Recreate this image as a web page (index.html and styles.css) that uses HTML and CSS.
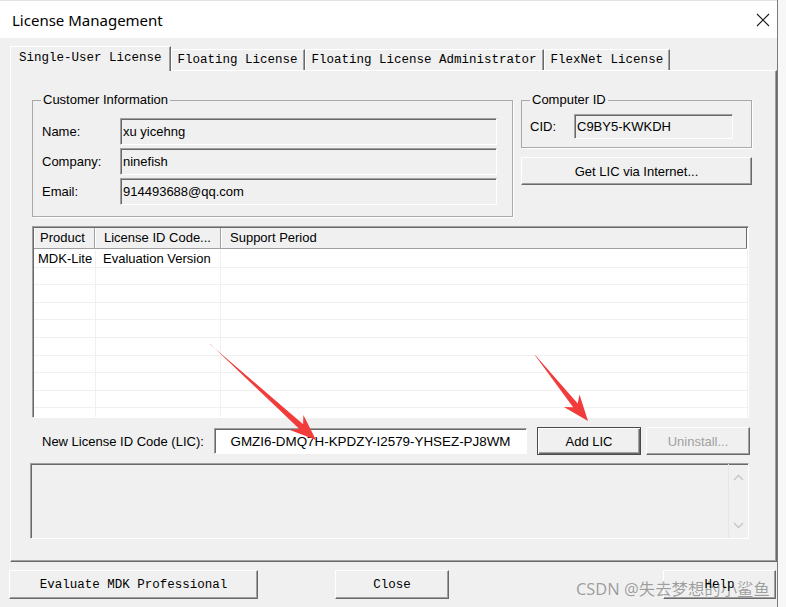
FILE: index.html
```html
<!DOCTYPE html>
<html lang="en">

<head>
    <meta charset="UTF-8">
    <meta name="viewport" content="width=device-width, initial-scale=1.0">
    <title>License Management</title>
    <link rel="stylesheet" href="styles.css">
</head>

<body>
    <div class="window">
        <div class="titlebar">
            <span class="title">License Management</span>
            <svg class="close-icon" width="14" height="14" viewBox="0 0 14 14">
                <path d="M1 1L13 13M13 1L1 13" stroke="#1a1a1a" stroke-width="1.1" fill="none" />
            </svg>
        </div>

        <div class="dialog">
            <div class="tabs">
                <div class="tab active">Single-User License</div>
                <div class="tab">Floating License</div>
                <div class="tab">Floating License Administrator</div>
                <div class="tab">FlexNet License</div>
            </div>

            <div class="panel">
                <div class="top-row">
                    <fieldset class="group customer">
                        <legend>Customer Information</legend>
                        <div class="fields">
                            <label>Name:</label>
                            <div class="field">xu yicehng</div>
                            <label>Company:</label>
                            <div class="field">ninefish</div>
                            <label>Email:</label>
                            <div class="field">914493688@qq.com</div>
                        </div>
                    </fieldset>

                    <div class="side">
                        <fieldset class="group computer">
                            <legend>Computer ID</legend>
                            <div class="cid-row">
                                <label>CID:</label>
                                <div class="field">C9BY5-KWKDH</div>
                            </div>
                        </fieldset>
                        <button class="btn get-lic">Get LIC via Internet...</button>
                    </div>
                </div>

                <div class="list">
                    <div class="list-head">
                        <div class="col c1">Product</div>
                        <div class="col c2">License ID Code...</div>
                        <div class="col c3">Support Period</div>
                    </div>
                    <div class="list-body">
                        <div class="row">
                            <div class="cell c1">MDK-Lite</div>
                            <div class="cell c2">Evaluation Version</div>
                            <div class="cell c3"></div>
                        </div>
                        <div class="row"><div class="cell c1"></div><div class="cell c2"></div><div class="cell c3"></div></div>
                        <div class="row"><div class="cell c1"></div><div class="cell c2"></div><div class="cell c3"></div></div>
                        <div class="row"><div class="cell c1"></div><div class="cell c2"></div><div class="cell c3"></div></div>
                        <div class="row"><div class="cell c1"></div><div class="cell c2"></div><div class="cell c3"></div></div>
                        <div class="row"><div class="cell c1"></div><div class="cell c2"></div><div class="cell c3"></div></div>
                        <div class="row"><div class="cell c1"></div><div class="cell c2"></div><div class="cell c3"></div></div>
                        <div class="row"><div class="cell c1"></div><div class="cell c2"></div><div class="cell c3"></div></div>
                        <div class="row"><div class="cell c1"></div><div class="cell c2"></div><div class="cell c3"></div></div>
                        <div class="row"><div class="cell c1"></div><div class="cell c2"></div><div class="cell c3"></div></div>
                    </div>
                </div>

                <div class="lic-row">
                    <label>New License ID Code (LIC):</label>
                    <div class="field lic-input">GMZI6-DMQ7H-KPDZY-I2579-YHSEZ-PJ8WM</div>
                    <button class="btn default add-lic">Add LIC</button>
                    <button class="btn uninstall" disabled>Uninstall...</button>
                </div>

                <div class="log">
                    <div class="scrollbar">
                        <svg width="11" height="7" viewBox="0 0 11 7"><path d="M1 6L5.5 1.5L10 6" stroke="#c4c4c4" stroke-width="1.3" fill="none" /></svg>
                        <svg width="11" height="7" viewBox="0 0 11 7"><path d="M1 1L5.5 5.5L10 1" stroke="#c4c4c4" stroke-width="1.3" fill="none" /></svg>
                    </div>
                </div>
            </div>

            <div class="footer">
                <button class="btn mono evaluate">Evaluate MDK Professional</button>
                <button class="btn mono close">Close</button>
                <button class="btn mono help">Help</button>
            </div>
        </div>

        <!-- red annotation arrows from the screenshot -->
        <svg class="arrows" width="786" height="607" viewBox="0 0 786 607">
            <polygon points="209.7,343.6 299.1,428.7 290,429.9 316,440 303.4,415.1 303.1,424.3 210.3,344.4" fill="#f23b3b" />
            <polygon points="534.6,354.7 573.1,407.3 563.9,407 588,421 579.5,394.4 577.7,403.5 535.4,355.3" fill="#f23b3b" />
        </svg>

        <div class="watermark">CSDN @失去梦想的小鲨鱼</div>
    </div>
</body>

</html>
```

FILE: styles.css
```css
body {
    margin: 0;
    width: 786px;
    height: 607px;
    overflow: hidden;
    background-color: #f7f7f7;
    font-family: "Liberation Sans", Arial, sans-serif;
    font-size: 13px;
    color: #000;
}

.window {
    position: relative;
    width: 778px;
    height: 607px;
    box-sizing: border-box;
    background-color: #f0f0f0;
    border-right: 1px solid #7a7a7a;
}

.titlebar {
    height: 38px;
    box-sizing: border-box;
    background-color: #fff;
    border-top: 1px solid #e2e2e2;
    display: flex;
    align-items: center;
    justify-content: space-between;
    padding: 0 7px 0 12px;
}

.title {
    font-family: "Noto Sans", sans-serif;
    font-size: 15px;
}

.dialog {
    padding: 8px 0 0 10px;
}

/* tabs */
.tabs {
    position: relative;
    z-index: 1;
    display: flex;
    align-items: flex-end;
    height: 24px;
}

.tab {
    height: 21px;
    box-sizing: border-box;
    padding: 0 6px;
    border-top: 1px solid #fff;
    border-left: 1px solid #fff;
    border-right: 1px solid #696969;
    box-shadow: inset -1px 0 #a0a0a0;
    font: 12.5px/20px "Liberation Mono", monospace;
    white-space: nowrap;
}

.tab.active {
    height: 25px;
    margin-bottom: -1px;
    padding: 0 8px;
    line-height: 22px;
    background-color: #f0f0f0;
}

.panel {
    height: 492px;
    box-sizing: border-box;
    border: 1px solid;
    border-color: #fff #696969 #696969 #fff;
    box-shadow: inset -1px -1px #a0a0a0;
    padding: 21px 0 0 21px;
}

/* group boxes */
.top-row {
    display: flex;
    align-items: flex-start;
    gap: 8px;
}

.group {
    margin: 0;
    box-sizing: border-box;
    border: 1px solid #a9a9a9;
    box-shadow: 1px 1px 0 #fff;
}

.group legend {
    padding: 0 2px;
    line-height: 16px;
}

.customer {
    width: 481px;
    padding: 0 15px 11px 8px;
}

.fields {
    display: grid;
    grid-template-columns: 79px 377px;
    grid-auto-rows: 27px;
    row-gap: 3px;
    align-items: center;
    margin-top: 10px;
}

.fields label {
    padding-left: 1px;
}

.field {
    height: 27px;
    box-sizing: border-box;
    display: flex;
    align-items: center;
    padding: 0 2px;
    border: 1px solid;
    border-color: #a0a0a0 #fff #fff #a0a0a0;
    box-shadow: inset 1px 1px #696969;
    background-color: #f0f0f0;
    white-space: nowrap;
}

.side {
    width: 231px;
}

.computer {
    width: 230px;
    padding: 0 18px 8px 8px;
}

.cid-row {
    display: flex;
    align-items: center;
    margin-top: 6px;
}

.cid-row label {
    width: 44px;
}

.cid-row .field {
    width: 159px;
    height: 25px;
}

/* buttons */
.btn {
    margin: 0;
    padding: 0;
    box-sizing: border-box;
    font: inherit;
    color: #000;
    background-color: #f0f0f0;
    border: 1px solid;
    border-color: #fff #696969 #696969 #fff;
    box-shadow: inset -1px -1px #a0a0a0;
}

.btn.default {
    border-color: #4a4a4a;
    box-shadow: inset 1px 1px #fff, inset -1px -1px #696969, inset -2px -2px #a0a0a0;
}

.btn:disabled {
    color: #a0a0a0;
}

.btn.mono {
    font: 12.5px "Liberation Mono", monospace;
}

.get-lic {
    width: 231px;
    height: 28px;
    margin-top: 9px;
}

/* license list */
.list {
    width: 717px;
    height: 192px;
    margin-top: 9px;
    box-sizing: border-box;
    padding: 1px 0 0 1px;
    border: 1px solid;
    border-color: #a0a0a0 #fff #fff #a0a0a0;
    box-shadow: inset 1px 1px #696969;
    background-color: #fff;
    overflow: hidden;
}

.list-head {
    display: flex;
    height: 21px;
    margin-right: 1px;
    box-sizing: border-box;
    border-bottom: 1px solid #a0a0a0;
    background-color: #f0f0f0;
}

.list-head .col {
    box-sizing: border-box;
    border-left: 1px solid #fff;
    border-right: 1px solid #a0a0a0;
    line-height: 20px;
    padding-left: 8px;
    white-space: nowrap;
}

.list-head .c1 {
    width: 61px;
    padding-left: 5px;
}

.list-head .c2 {
    width: 126px;
}

.list-head .c3 {
    flex: 1;
    border-right-color: #696969;
}

.list-body {
    margin-top: 1px;
}

.row {
    display: flex;
    height: 17.6px;
    box-sizing: border-box;
    border-bottom: 1px solid #f0f0f0;
}

.cell {
    box-sizing: border-box;
    border-right: 1px solid #f0f0f0;
    line-height: 18px;
    white-space: nowrap;
}

.cell.c1 {
    width: 62px;
    padding-left: 4px;
}

.cell.c2 {
    width: 125px;
    padding-left: 7px;
}

.cell.c3 {
    flex: 1;
}

/* LIC entry */
.lic-row {
    display: flex;
    align-items: center;
    height: 28px;
    margin-top: 9px;
}

.lic-row label {
    width: 172px;
    margin-left: 10px;
}

.lic-input {
    width: 313px;
    height: 26px;
    justify-content: center;
    background-color: #fff;
    font-size: 13.4px;
}

.add-lic {
    width: 104px;
    height: 28px;
    margin-left: 10px;
}

.uninstall {
    width: 104px;
    height: 28px;
    margin-left: 5px;
}

/* status box */
.log {
    width: 719px;
    height: 76px;
    margin: 8px 0 0 -2px;
    box-sizing: border-box;
    display: flex;
    justify-content: flex-end;
    border: 1px solid;
    border-color: #a0a0a0 #fff #fff #a0a0a0;
    box-shadow: inset 1px 1px #696969;
}

.scrollbar {
    width: 20px;
    box-sizing: border-box;
    border-left: 1px solid #e6e6e6;
    display: flex;
    flex-direction: column;
    align-items: center;
    justify-content: space-between;
    padding: 10px 0 9px;
}

/* bottom buttons */
.footer {
    display: flex;
    height: 29px;
    margin-top: 8px;
}

.footer .btn {
    height: 29px;
}

.evaluate {
    width: 249px;
    margin-left: -1px !important;
}

.close {
    width: 114px;
    margin-left: 77px !important;
}

.help {
    width: 113px;
    margin-left: auto !important;
    margin-right: 1px !important;
}

/* overlays */
.arrows {
    position: absolute;
    top: 0;
    left: 0;
    pointer-events: none;
}

.watermark {
    position: absolute;
    left: 576px;
    top: 578px;
    font-family: "Noto Sans", "Noto Sans CJK SC", sans-serif;
    font-size: 16.4px;
    line-height: 22px;
    color: rgba(0, 0, 0, 0.36);
    white-space: nowrap;
    pointer-events: none;
}
```
